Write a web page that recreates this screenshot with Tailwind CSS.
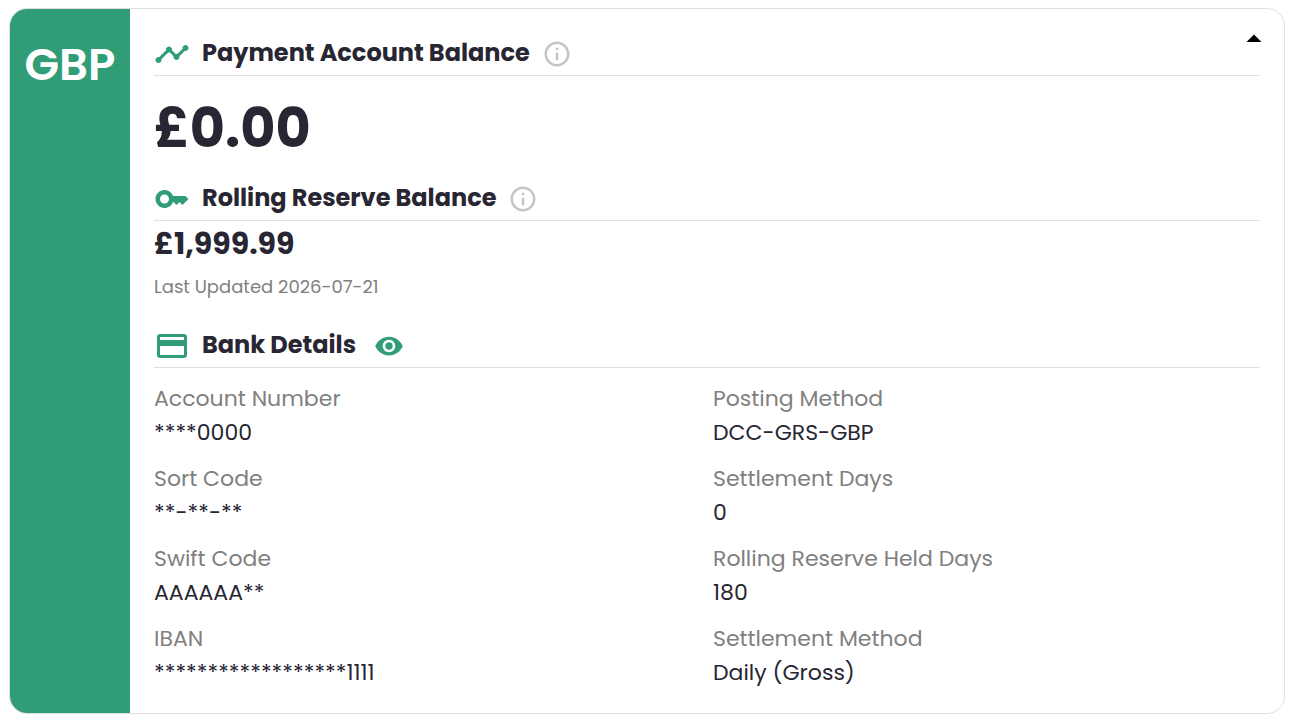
<!DOCTYPE html>
<html lang="en">
<head>
	<meta charset="UTF-8">
	<meta name="viewport" content="width=device-width, initial-scale=1.0">
	<title>GBP account</title>
	<script src="https://cdn.jsdelivr.net/npm/@tailwindcss/browser@4"></script>
</head>
<body class="bg-white px-[9px] py-2 font-[Poppins,Inter,sans-serif] text-[#272632]">
	<div class="relative flex border border-[#e0e0e0] rounded-[18px] overflow-hidden">
		<!-- Currency -->
		<div class="w-[120px] shrink-0 bg-[#319d76] pt-[26px] text-center">
			<h1 class="text-[45px] leading-[60px] font-semibold text-white">GBP</h1>
		</div>

		<button type="button" aria-label="Collapse" class="absolute top-3 right-3 w-9 h-9 text-black cursor-pointer">
			<svg class="w-9 h-9" viewBox="0 0 24 24" fill="currentColor"><path d="m7 14 5-5 5 5z"/></svg>
		</button>

		<div class="flex-1 px-6 pt-6 pb-[23px]">
			<!-- Payment balance -->
			<section>
				<div class="flex items-center h-[43px] border-b border-[#e0e0e0]">
					<svg class="w-9 h-9 mr-3 text-[#319d76]" viewBox="0 0 24 24" fill="currentColor"><path d="M23 8c0 1.100-.9 2-2 2-.18 0-.35-.02-.51-.07l-3.560 3.550c.05.16.07.34.07.52 0 1.100-.9 2-2 2s-2-.9-2-2c0-.18.02-.36.07-.52l-2.550-2.550c-.16.05-.34.07-.52.07s-.36-.02-.52-.07l-4.550 4.560c.05.16.07.33.07.51 0 1.100-.9 2-2 2s-2-.9-2-2 .9-2 2-2c.18 0 .35.02.51.07l4.560-4.550C8.020 9.360 8 9.180 8 9c0-1.100.9-2 2-2s2 .9 2 2c0 .18-.02.36-.07.52l2.550 2.550c.16-.05.34-.07.52-.07s.36.02.52.07l3.550-3.560C19.020 8.350 19 8.180 19 8c0-1.100.9-2 2-2s2 .9 2 2z"/></svg>
					<h2 class="pb-0.5 text-2xl font-bold">Payment Account Balance</h2>
					<button type="button" aria-label="About payment account balance" class="ml-3 text-[#c4c4c4]">
						<svg class="w-[30px] h-[30px]" viewBox="0 0 24 24" fill="currentColor"><path d="M11 7h2v2h-2zm0 4h2v6h-2zm1-9C6.480 2 2 6.480 2 12s4.480 10 10 10 10-4.480 10-10S17.520 2 12 2zm0 18c-4.410 0-8-3.590-8-8s3.590-8 8-8 8 3.590 8 8-3.590 8-8 8z"/></svg>
					</button>
				</div>
				<p class="mt-3 text-[54px] leading-[80px] font-bold">£0.00</p>
			</section>

			<!-- Rolling reserve -->
			<section class="mt-2.5">
				<div class="flex items-center h-[43px] border-b border-[#e0e0e0]">
					<svg class="w-9 h-9 mr-3 text-[#319d76]" viewBox="0 0 24 24" fill="currentColor"><path d="M21 10h-8.350C11.830 7.670 9.610 6 7 6c-3.310 0-6 2.690-6 6s2.690 6 6 6c2.610 0 4.830-1.670 5.650-4H13l2 2 2-2 2 2 4-4.040L21 10zM7 15c-1.650 0-3-1.350-3-3s1.350-3 3-3 3 1.350 3 3-1.350 3-3 3z"/></svg>
					<h2 class="pb-0.5 text-2xl font-bold">Rolling Reserve Balance</h2>
					<button type="button" aria-label="About rolling reserve balance" class="ml-3 text-[#c4c4c4]">
						<svg class="w-[30px] h-[30px]" viewBox="0 0 24 24" fill="currentColor"><path d="M11 7h2v2h-2zm0 4h2v6h-2zm1-9C6.480 2 2 6.480 2 12s4.480 10 10 10 10-4.480 10-10S17.520 2 12 2zm0 18c-4.410 0-8-3.590-8-8s3.590-8 8-8 8 3.590 8 8-3.590 8-8 8z"/></svg>
					</button>
				</div>
				<p class="text-3xl leading-[45px] font-bold">£1,999.99</p>
				<p class="mt-2 text-lg leading-[26px] text-[#808080]">Last Updated 2026-07-21</p>
			</section>

			<!-- Bank details -->
			<section class="mt-[25px]">
				<div class="flex items-center h-[43px] border-b border-[#e0e0e0]">
					<svg class="w-9 h-9 mr-3 text-[#319d76]" viewBox="0 0 24 24" fill="currentColor"><path d="M20 4H4c-1.110 0-1.990.89-1.990 2L2 18c0 1.110.89 2 2 2h16c1.110 0 2-.89 2-2V6c0-1.110-.89-2-2-2zm0 14H4v-6h16v6zm0-10H4V6h16v2z"/></svg>
					<h2 class="pb-0.5 text-2xl font-bold">Bank Details</h2>
					<button type="button" aria-label="Show bank details" class="ml-[18px] text-[#319d76]">
						<svg class="w-[30px] h-[30px]" viewBox="0 0 24 24" fill="currentColor"><path d="M12 4.500C7 4.500 2.730 7.610 1 12c1.730 4.390 6 7.500 11 7.500s9.270-3.110 11-7.500c-1.730-4.390-6-7.500-11-7.500zM12 17c-2.760 0-5-2.240-5-5s2.240-5 5-5 5 2.240 5 5-2.240 5-5 5zm0-8c-1.660 0-3 1.340-3 3s1.340 3 3 3 3-1.340 3-3-1.340-3-3-3z"/></svg>
					</button>
				</div>
				<div class="mt-3.5 grid grid-cols-2 gap-x-3 text-[22px] leading-[34px]">
					<dl class="space-y-3">
						<div><dt class="text-[#808080]">Account Number</dt><dd>****0000</dd></div>
						<div><dt class="text-[#808080]">Sort Code</dt><dd>**-**-**</dd></div>
						<div><dt class="text-[#808080]">Swift Code</dt><dd>AAAAAA**</dd></div>
						<div><dt class="text-[#808080]">IBAN</dt><dd>******************1111</dd></div>
					</dl>
					<dl class="space-y-3">
						<div><dt class="text-[#808080]">Posting Method</dt><dd>DCC-GRS-GBP</dd></div>
						<div><dt class="text-[#808080]">Settlement Days</dt><dd>0</dd></div>
						<div><dt class="text-[#808080]">Rolling Reserve Held Days</dt><dd>180</dd></div>
						<div><dt class="text-[#808080]">Settlement Method</dt><dd>Daily (Gross)</dd></div>
					</dl>
				</div>
			</section>
		</div>
	</div>
</body>
</html>
